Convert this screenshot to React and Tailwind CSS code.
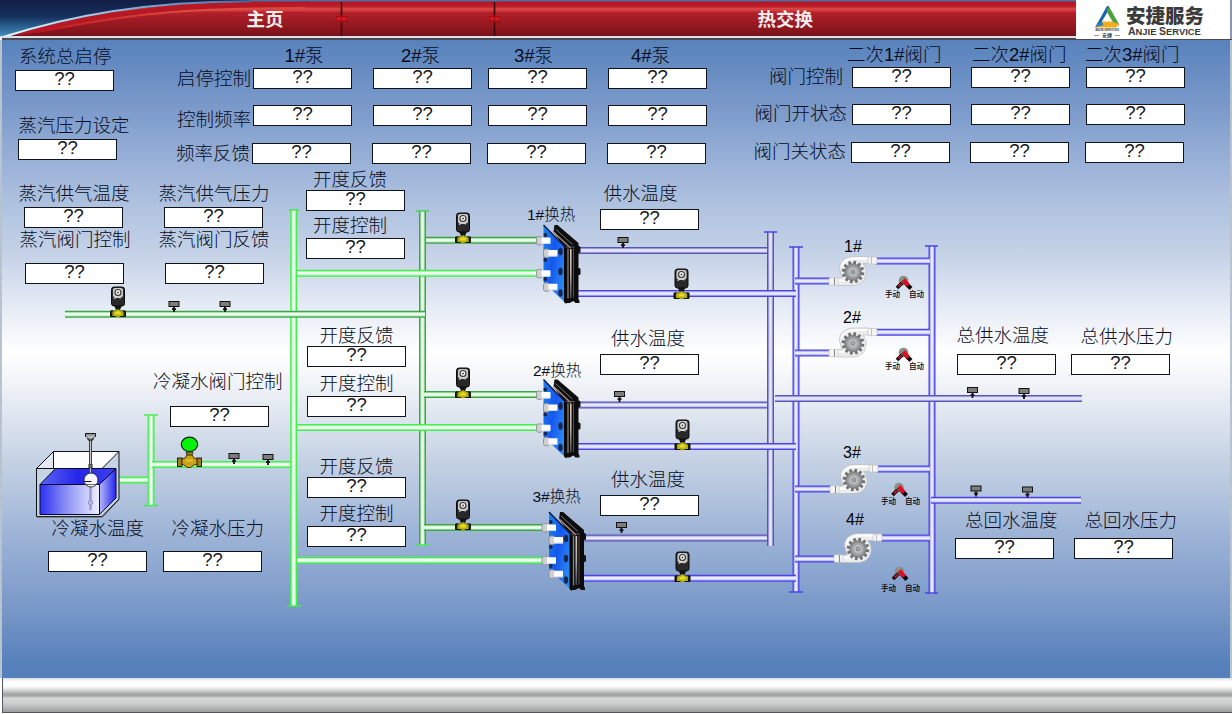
import React from "react";

const TOP = 40;

const labels = [
  ["系统总启停", 19, 56.5], ["蒸汽压力设定", 18.5, 126],
  ["蒸汽供气温度", 18.5, 194], ["蒸汽供气压力", 158.5, 194],
  ["蒸汽阀门控制", 19.5, 239.5], ["蒸汽阀门反馈", 158.5, 239.5],
  ["开度反馈", 313, 179.5], ["开度控制", 313, 225.5],
  ["开度反馈", 319.5, 335.5], ["开度控制", 319.5, 383.5],
  ["开度反馈", 319.5, 466.5], ["开度控制", 319.5, 513.5],
  ["冷凝水阀门控制", 153, 382], ["冷凝水温度", 51.5, 528.5], ["冷凝水压力", 171.5, 528.5],
  ["供水温度", 603.5, 194], ["供水温度", 611, 339], ["供水温度", 611, 479.5],
  ["总供水温度", 956.5, 336], ["总供水压力", 1080.5, 336.5],
  ["总回水温度", 965, 520.5], ["总回水压力", 1084.5, 520.5],
];

const midLabels = [
  ["1#换热", 527, 215], ["2#换热", 533, 371], ["3#换热", 532.5, 497],
];

const pumpLabels = [["1#", 844, 246.5], ["2#", 843, 318], ["3#", 843, 452.5], ["4#", 846, 519.5]];

const boxes = [
  [15, 70], [18, 139], [24, 207], [164, 207], [25, 263], [165, 263],
  [306, 190], [306, 238], [170, 406], [307, 346], [307, 396], [307, 477], [307, 526],
  [48, 551], [163, 551], [600, 209], [600, 354], [600, 495],
  [957, 354], [1071, 354], [955, 538], [1074, 538],
];

const switches = [[904, 281], [904, 353], [899.5, 488], [900, 572]];
const switchText = [[885, 294.5], [885, 366.5], [881, 501.5], [881, 589]];

const tones = {
  lime: ["#43ee4d", "#a9f7b3", "#f4fff4"],
  green: ["#3fa348", "#a5e2a8", "#f1fcf0"],
  blue: ["#4b43e6", "#b1b2f4", "#e9ebfd"],
  violet: ["#5a54b4", "#b3b3e4", "#e6e8f8"],
};

const pipes = [
  ["lime", 151, 416, 151, 505], ["lime", 118, 480, 148, 480], ["lime", 152, 464.5, 292, 464.5],
  ["lime", 293.7, 210, 293.7, 606],
  ["green", 422.5, 211, 422.5, 545],
  ["green", 65, 314.3, 425, 314.3],
  ["green", 426, 240.3, 541, 240.3], ["green", 424, 394.5, 541, 394.5], ["green", 424, 527.5, 546, 527.5],
  ["lime", 297, 273.3, 541, 273.3], ["lime", 297, 427.5, 541, 427.5], ["lime", 297, 560.3, 546, 560.3],
  ["violet", 578, 250.5, 768, 250.5], ["violet", 578, 405, 768, 405], ["violet", 584, 538, 768, 538],
  ["violet", 770.5, 232, 770.5, 546],
  ["blue", 796, 247, 796, 592],
  ["blue", 576, 293.5, 796, 293.5], ["blue", 576, 446.5, 796, 446.5], ["blue", 580, 578.3, 796, 578.3],
  ["blue", 932, 246, 932, 594],
  ["blue", 795, 281, 830, 281], ["blue", 795, 353, 830, 353], ["blue", 795, 489, 831, 489], ["blue", 795, 559, 835, 559],
  ["blue", 876, 261, 930, 261], ["blue", 876, 332.3, 930, 332.3], ["blue", 877, 469, 930, 469], ["blue", 881, 538, 930, 538],
  ["violet", 775, 398.5, 1082, 398.5],
  ["blue", 931, 500.3, 1081, 500.3],
];

const caps = [
  ["#43ee4d", 144, 158, 415], ["#43ee4d", 144, 158, 505.5],
  ["#43ee4d", 289, 299, 210], ["#43ee4d", 287, 301, 606],
  ["#43d64d", 416, 429, 211], ["#43ee4d", 416, 429, 545],
  ["#4b43e6", 764, 777, 232], ["#4b43e6", 789, 803, 247], ["#4b43e6", 789, 803, 592],
  ["#4b43e6", 925, 938, 246], ["#4b43e6", 925, 938, 593],
];

const sensors = [
  [174, 301], [225, 301], [234, 453], [268, 454], [623, 237], [619.5, 391], [621.5, 522],
  [972.5, 387], [1024, 388], [976, 485.5], [1027.5, 486.5],
];

const valves = [
  [118, 287], [463, 213], [463, 368], [463, 500], [681.5, 269], [682.5, 420], [682.5, 552],
];

function Pipe({ d }) {
  const [tone, x1, y1, x2, y2] = d;
  const [edge, mid, core] = tones[tone];
  const p = { x1, y1, x2, y2 };
  return (
    <g>
      <line {...p} stroke={edge} strokeWidth="7" />
      <line {...p} stroke={mid} strokeWidth="4.4" />
      <line {...p} stroke={core} strokeWidth="2.4" />
    </g>
  );
}

function Sensor({ x, y }) {
  return (
    <g transform={`translate(${x} ${y})`}>
      <rect x="-5" y="0.5" width="10" height="5" fill="#7d7d7d" stroke="#111" />
      <path d="M0 6v5M-2 8.2h4" stroke="#111" strokeWidth="1.8" />
    </g>
  );
}

function Valve({ x, y }) {
  return (
    <g transform={`translate(${x} ${y})`}>
      <path d="M-4.5 17h9l-2.5 6h-4z" fill="#151515" />
      <rect x="-6.5" y="0" width="13" height="19" rx="2.5" fill="#292929" stroke="#0c0c0c" />
      <rect x="-5" y="1" width="10" height="9.5" rx="2" fill="#c9c9c9" />
      <circle cx="0" cy="5.5" r="3" fill="#f3f3f3" stroke="#333" strokeWidth="1.1" />
      <circle cx="0" cy="5.5" r="0.9" fill="#444" />
      <path d="M-4 11.5l3-1.5 4 1" stroke="#ddd" strokeWidth="1.2" fill="none" />
      <rect x="-8" y="23.5" width="16" height="6.5" rx="1" fill="#151500" />
      <path d="M-6.5 25L-2.5 23.5L0 22L2.5 23.5L6.5 25V29H3L0 30.5L-3 29H-6.5z" fill="#b5ae12" />
      <path d="M-3 25.5l3-1.5 3 1.5v2h-6z" fill="#e2dc27" />
      <path d="M-6.2 23.5v6.5M6.2 23.5v6.5" stroke="#111" strokeWidth="1.2" />
    </g>
  );
}

function Port({ x, y }) {
  return (
    <g>
      <rect x={x} y={y - 4} width="6" height="8.5" rx="2.2" fill="#d0d0d2" stroke="#8d8d92" strokeWidth="0.9" />
      <rect x={x + 5} y={y - 3} width="9" height="6.4" rx="0.6" fill="#fff" />
      <path d={`M${x + 5.5} ${y + 3}h8`} stroke="#c8cfe6" strokeWidth="0.8" />
    </g>
  );
}

function Exchanger({ x, y }) {
  return (
    <g transform={`translate(${x} ${y})`}>
      <rect x="32" y="21" width="5" height="7" rx="1.5" fill="#111" />
      <rect x="32" y="43" width="5" height="7" rx="1.5" fill="#111" />
      <path d="M11 0h3l21 18v56l1 2v2h-4l-2-2-4 2h-4V24L10 7z" fill="#0c0c0c" />
      <path d="M12 4l17 15.5" stroke="#777" strokeWidth="1" />
      <path d="M10 7l17 16" stroke="#a8907c" strokeWidth="1.4" />
      <path d="M24.5 23.5v50" stroke="#8a8078" strokeWidth="1.3" />
      <path d="M27.3 24v49" stroke="url(#plate)" strokeWidth="1.6" />
      <path d="M30 23.5v49" stroke="#55504c" strokeWidth="1" />
      <path d="M22 22h9" stroke="#777" strokeWidth="0.8" />
      <path d="M0 0L22.5 23V78.5L0 57z" fill="url(#face)" />
      <path d="M20.5 21l2.5 2.5V79l-2.5-2z" fill="#080808" />
      <path d="M0 0L22.5 23" stroke="#0b1640" strokeWidth="1.4" />
      <g fill="#16264a">
        <ellipse cx="1.8" cy="10" rx="1.8" ry="2" />
        <ellipse cx="1.8" cy="35" rx="1.8" ry="2" />
        <ellipse cx="1.8" cy="54" rx="1.8" ry="2" />
        <ellipse cx="17" cy="26.5" rx="2.2" ry="3.8" />
        <ellipse cx="17" cy="46.5" rx="2.2" ry="3.8" />
        <ellipse cx="17" cy="68" rx="2.2" ry="3.8" />
      </g>
      <Port x={-7} y={15.5} />
      <Port x={0} y={28} />
      <Port x={-7} y={48.3} />
      <Port x={0} y={61.8} />
    </g>
  );
}

const teeth = [0, 30, 60, 90, 120, 150, 180, 210, 240, 270, 300, 330];

function Pump({ x, y }) {
  return (
    <g transform={`translate(${x} ${y})`}>
      <path d="M-13.500 -3C-14 -11 -7 -15.500 1 -15.500H16V-8.500H9.500C14 -4 14 3 11 8C8 12 4 13.500 0 13.500H-16V6H-11z" fill="#ececed" stroke="#bcbcbe" strokeWidth="0.7" />
      <path d="M-11.500 -5C-10 -11 -5 -13.500 2 -13.500H15" stroke="#fff" strokeWidth="2" fill="none" />
      <path d="M-15 8.5h8" stroke="#fff" strokeWidth="2" />
      <rect x="15" y="-15" width="9" height="7" rx="1" fill="#f5f5f5" stroke="#bcbcbe" strokeWidth="0.6" />
      <path d="M18.5 -15v7" stroke="#b2b2b4" strokeWidth="0.8" />
      <rect x="-24" y="5.8" width="9" height="7.400" rx="1" fill="#f5f5f5" stroke="#bcbcbe" strokeWidth="0.6" />
      <path d="M-18.5 6v7" stroke="#88888a" strokeWidth="1.1" />
      <g fill="#6f7173">
        {teeth.map((a) => <path key={a} d="M-1.7 -7.5L-1.2 -11.3H1.2L1.7 -7.5z" transform={`rotate(${a + 10})`} />)}
      </g>
      <circle r="8.6" fill="url(#gear)" />
      <circle r="1.8" fill="#b5b5b5" stroke="#666" strokeWidth="0.8" />
    </g>
  );
}

function Switch({ x, y }) {
  return (
    <g transform={`translate(${x} ${y})`}>
      <circle cx="-0.5" cy="-0.5" r="4.8" fill="#899089" />
      <path d="M-2 2L-7 7" stroke="#080808" strokeWidth="3.8" />
      <path d="M-2.5 2.5l-3 3" stroke="#d00b20" strokeWidth="2" />
      <path d="M3 3.5L7 7.5" stroke="#080808" strokeWidth="4" />
      <path d="M-0.5 -1.5L4.5 4.5" stroke="#e60b20" strokeWidth="4" />
      <path d="M-2.5 0L3 6" stroke="#300" strokeWidth="0.7" />
    </g>
  );
}

function Tank() {
  return (
    <g strokeLinejoin="round">
      <path d="M36.5 468.5L53.5 451.5H119V499L102 516.5H36.5z" fill="#c5d3e2" stroke="#111" />
      <path d="M54 452H118.5L102 468.5H54z" fill="#fdfdfe" />
      <path d="M36.5 468.5L53.5 451.5V468.5z" fill="#e3e9f2" />
      <path d="M53.5 451.5H119L102 468.5H36.5L53.5 451.5V468" fill="none" stroke="#111" />
      <path d="M40 484.5L55.5 468.5H116L99.5 484.5z" fill="url(#liquidTop)" stroke="#080830" />
      <path d="M99.5 484.5L116 468.5V498L99.5 514.5z" fill="url(#liquidSide)" stroke="#080830" />
      <rect x="40" y="484.5" width="59.5" height="30" fill="url(#liquid)" stroke="#080830" />
      <path d="M37 517H102.5L119 499.5" fill="none" stroke="#444" />
      <path d="M90.5 487v14M90.5 504v6" stroke="#9b96c8" strokeWidth="2.4" />
      <rect x="88.5" y="501" width="4" height="3" fill="#c9c9e6" stroke="#8580b8" strokeWidth="0.7" />
      <path d="M90.5 440v36" stroke="#333" strokeWidth="3" />
      <path d="M90.5 440v36" stroke="#c5c5c5" strokeWidth="1.2" />
      <rect x="88.8" y="464.5" width="3.4" height="3.2" fill="#777" stroke="#222" strokeWidth="0.7" />
      <path d="M85.5 433.5h10v3l-2.5 1.5v2h-5v-2l-2.5-1.5z" fill="#999" stroke="#111" />
      <path d="M86 437h9" stroke="#eee" strokeWidth="0.8" />
      <circle cx="91" cy="480" r="7" fill="#f7f7fb" stroke="#222" strokeWidth="0.9" />
      <path d="M84.5 481.5h7" stroke="#111" strokeWidth="1" />
      <path d="M86 484.5h10" stroke="#444" strokeWidth="0.8" />
    </g>
  );
}

function GaugeValve() {
  return (
    <g>
      <path d="M186 452h7l-1.5 4.500h-4z" fill="#a3840f" stroke="#222" strokeWidth="0.8" />
      <path d="M181 459l4-1 2-3h5l2 3 4 1v5l-4 1-3.500 2.500h-3L184 465l-3-1z" fill="#caa416" stroke="#302600" strokeWidth="0.9" />
      <rect x="177.500" y="458" width="4.500" height="8.500" fill="#9d7c10" stroke="#111" strokeWidth="0.9" />
      <rect x="197" y="458" width="4.500" height="8.500" fill="#9d7c10" stroke="#111" strokeWidth="0.9" />
      <path d="M185.500 461.500c1-3 7-3 8 0" fill="#e5c22c" />
      <ellipse cx="189.500" cy="444.300" rx="8.200" ry="7.200" fill="#05f30b" stroke="#0d1f0d" strokeWidth="1.200" />
    </g>
  );
}

function Box({ children = "??" }) {
  return (
    <div className="flex h-[21px] w-[99px] items-center justify-center border border-[#10131c] bg-white pb-[2px] font-['Liberation_Sans',sans-serif] text-[18.500px] leading-none text-[#15171c]">
      {children}
    </div>
  );
}

function Row({ name, count, cols, className, nameClass = "" }) {
  return (
    <div className={`grid h-[21px] ${cols} ${className}`}>
      <div className={`flex items-center justify-end whitespace-nowrap pr-[2px] ${nameClass}`}>{name}</div>
      {Array.from({ length: count }, (_, i) => <Box key={i} />)}
    </div>
  );
}

function Logo() {
  return (
    <div className="flex h-[39px] w-[156px] items-start border-r-2 border-[#8a97ad] bg-white pl-[17px] text-[#3b3b3b]">
      <div className="flex w-[28px] flex-col items-center pt-[6px]">
        <svg width="26" height="23" viewBox="0 0 26 23">
          <path d="M13 0L1 21.500L7 17L13.500 6L17 12L19.500 9.500L14.500 0z" fill="#1766ae" />
          <path d="M14.500 0L25.500 19L19 16.500L12.500 5z" fill="#4da13c" />
          <path d="M12.500 5L16 11L19 16.500L17 12z" fill="#8dc63f" />
          <path d="M1 21.500H22L25.500 18.500L18.500 15.500H8z" fill="#f0ae21" />
          <path d="M1 21.500L8 15.500L9.500 19z" fill="#1d82c4" />
        </svg>
        <div className="h-[3px] whitespace-nowrap text-[3px] font-bold leading-[3px] tracking-tight">ANJIE SERVICES</div>
        <div className="flex items-center gap-[3px] text-[5px] font-bold leading-[6px]">
          <span className="h-px w-[5px] bg-[#999]" />安捷<span className="h-px w-[5px] bg-[#999]" />
        </div>
      </div>
      <div className="pl-[5px] pt-[7px]">
        <div className="h-[19px] whitespace-nowrap text-[19.500px] font-black leading-[19px]">安捷服务</div>
        <div className="whitespace-nowrap pl-[2px] font-['Liberation_Sans',sans-serif] text-[9.400px] font-bold leading-[10px]">
          <span className="text-[10.500px]">A</span>NJIE <span className="text-[10.500px]">S</span>ERVICE
        </div>
      </div>
    </div>
  );
}

function Header() {
  return (
    <header className="relative flex h-[40px] items-start justify-between">
      <svg className="absolute inset-0" width="1232" height="40" viewBox="0 0 1232 40">
        <defs>
          <linearGradient id="navy" x1="0" y1="0" x2="0" y2="1">
            <stop offset="0" stopColor="#131d45" /><stop offset="0.450" stopColor="#15305c" /><stop offset="1" stopColor="#3e8cbd" />
          </linearGradient>
          <linearGradient id="red" x1="0" y1="0" x2="0" y2="1">
            <stop offset="0" stopColor="#b41420" /><stop offset="0.160" stopColor="#c0202a" /><stop offset="0.200" stopColor="#d94745" />
            <stop offset="0.270" stopColor="#cf3a3c" /><stop offset="0.320" stopColor="#b3202a" /><stop offset="1" stopColor="#7b1118" />
          </linearGradient>
          <linearGradient id="arc" x1="0" y1="0" x2="1" y2="0">
            <stop offset="0" stopColor="#eaf6fb" /><stop offset="0.500" stopColor="#8eb0d4" /><stop offset="1" stopColor="#4a6ba8" />
          </linearGradient>
          <linearGradient id="sweep" gradientUnits="userSpaceOnUse" x1="70" y1="0" x2="300" y2="0">
            <stop offset="0" stopColor="#d8483c" stopOpacity="0.300" /><stop offset="0.500" stopColor="#dc5040" /><stop offset="1" stopColor="#d94745" />
          </linearGradient>
        </defs>
        <rect width="1232" height="36" fill="url(#navy)" />
        <rect x="250" width="982" height="2" fill="#4a6ea6" />
        <path d="M10 36C70 17 150 1.500 260 1.500H1232V36z" fill="url(#red)" />
        <path d="M14 35.500C70 18 150 2 260 2L300 7C190 9 110 18 50 31z" fill="#b81823" />
        <path d="M60 28C140 12 200 8 305 8" stroke="url(#sweep)" strokeWidth="2" fill="none" />
        <path d="M3 37C70 16 145 1.200 250 1.200" stroke="url(#arc)" strokeWidth="2" fill="none" />
        <rect y="36" width="1232" height="2" fill="#d9dfe6" />
        <rect x="2" y="38" width="1230" height="2" fill="#4d4854" />
        <path d="M341.500 2v34M494.500 2v34" stroke="#3c070b" strokeWidth="1.600" />
        <path d="M336 16.500h11v4.500h-11zM489.500 16.500h11v4.500h-11z" fill="#d8141d" stroke="#8e0d14" strokeWidth="0.800" />
        <path d="M341.500 15v8M494.500 15v8" stroke="#a00c14" strokeWidth="1" />
      </svg>
      <nav className="relative flex h-[40px] items-center pl-[246.500px] pt-px text-[18.500px] font-bold leading-none text-[#f5eeee]">
        <span className="w-[511px]">主页</span>
        <span>热交换</span>
      </nav>
      <div className="relative">
        <Logo />
      </div>
    </header>
  );
}

export default function App() {
  return (
    <div className="flex h-[714px] w-[1232px] flex-col overflow-hidden bg-white font-['Liberation_Sans','Noto_Sans_CJK_SC',sans-serif]">
      <Header />
      <main className="relative h-[638px] border-l-2 border-r-2 border-[#b9c2cf] bg-[linear-gradient(to_bottom,#5882bc_0%,#7c9bcb_11%,#a3b9db_22%,#cad6e9_35%,#e6ecf5_42%,#ffffff_49%,#f0f3f7_54%,#c5d2e4_66%,#9fb5d7_77%,#7c9bca_88%,#5680ba_98%,#5480bb_100%)] text-[18.500px] font-light text-[#060c1c]">
        <div className="flex pl-[173px] pt-[3px] leading-none">
          <section className="w-[576px] pt-px">
            <div className="grid h-[24px] grid-cols-[78px_120px_115px_120px_99px] items-center">
              <span />
              <span className="pl-[31.500px]">1#泵</span>
              <span className="pl-[28px]">2#泵</span>
              <span className="pl-[26px]">3#泵</span>
              <span className="pl-[23px]">4#泵</span>
            </div>
            <Row name="启停控制" count={4} cols="grid-cols-[78px_120px_115px_120px_99px]" className="" nameClass="pt-[2px]" />
            <Row name="控制频率" count={4} cols="grid-cols-[78px_120px_115px_120px_99px]" className="mt-[16px]" nameClass="pt-[6px]" />
            <Row name="频率反馈" count={4} cols="grid-cols-[77px_120px_115px_120px_99px]" className="mt-[17px]" nameClass="pt-px" />
          </section>
          <section>
            <div className="grid h-[24px] grid-cols-[96px_125px_113px_99px] items-center whitespace-nowrap">
              <span />
              <span>二次1#阀门</span>
              <span>二次2#阀门</span>
              <span>二次3#阀门</span>
            </div>
            <Row name="阀门控制" count={3} cols="grid-cols-[101px_119px_115px_99px]" className="" nameClass="pr-[9px]" />
            <Row name="阀门开状态" count={3} cols="grid-cols-[101px_119px_115px_99px]" className="mt-[16px]" nameClass="pr-[5px]" />
            <Row name="阀门关状态" count={3} cols="grid-cols-[100px_119px_115px_99px]" className="mt-[17px]" nameClass="pr-[5px]" />
          </section>
        </div>

        <div className="absolute -left-[2px] top-0 h-[638px] w-[1232px]">
          <svg className="absolute inset-0" width="1232" height="638" viewBox="0 40 1232 638">
            <defs>
              <linearGradient id="face" x1="0" y1="0" x2="1" y2="0.600">
                <stop offset="0" stopColor="#1a86ee" /><stop offset="0.500" stopColor="#1657ee" /><stop offset="1" stopColor="#2b8af2" />
              </linearGradient>
              <linearGradient id="plate" gradientUnits="userSpaceOnUse" x1="0" y1="24" x2="0" y2="73">
                <stop offset="0" stopColor="#e0c9ba" /><stop offset="0.500" stopColor="#b8b2b0" /><stop offset="1" stopColor="#4a4a4a" />
              </linearGradient>
              <linearGradient id="liquid"><stop offset="0" stopColor="#2b2ff2" /><stop offset="0.450" stopColor="#8d92f6" /><stop offset="1" stopColor="#f0f1fe" /></linearGradient>
              <linearGradient id="liquidTop"><stop offset="0" stopColor="#5c64f3" /><stop offset="0.500" stopColor="#2526e8" /><stop offset="1" stopColor="#3d3ff2" /></linearGradient>
              <linearGradient id="liquidSide"><stop offset="0" stopColor="#b6b9fa" /><stop offset="1" stopColor="#2325ee" /></linearGradient>
              <radialGradient id="gear"><stop offset="0" stopColor="#dedede" /><stop offset="0.600" stopColor="#a6a7a9" /><stop offset="1" stopColor="#77797b" /></radialGradient>
            </defs>
            {pipes.map((d, i) => <Pipe key={i} d={d} />)}
            {caps.map(([c, x1, x2, y], i) => <path key={i} d={`M${x1} ${y}H${x2}`} stroke={c} strokeWidth="1.500" />)}
            {sensors.map(([x, y], i) => <Sensor key={i} x={x} y={y} />)}
            {valves.map(([x, y], i) => <Valve key={i} x={x} y={y} />)}
            <Exchanger x={543.500} y={225} />
            <Exchanger x={543.500} y={379.500} />
            <Exchanger x={549} y={512} />
            <Pump x={853} y={272} />
            <Pump x={853} y={343.500} />
            <Pump x={854} y={480} />
            <Pump x={858} y={549} />
            {switches.map(([x, y], i) => <Switch key={i} x={x} y={y} />)}
            <Tank />
            <GaugeValve />
          </svg>
          {boxes.map(([x, y], i) => (
            <div key={i} className="absolute" style={{ left: x, top: y - TOP }}><Box /></div>
          ))}
          {labels.map(([t, x, y], i) => (
            <div key={i} className="absolute whitespace-nowrap leading-[28px]" style={{ left: x, top: y - 14 - TOP }}>{t}</div>
          ))}
          {midLabels.map(([t, x, y], i) => (
            <div key={i} className="absolute whitespace-nowrap text-[15.500px] leading-[20px]" style={{ left: x, top: y - 10 - TOP }}>{t}</div>
          ))}
          {pumpLabels.map(([t, x, y], i) => (
            <div key={i} className="absolute whitespace-nowrap text-[16px] leading-[20px] text-black" style={{ left: x, top: y - 10 - TOP }}>{t}</div>
          ))}
          {switchText.map(([x, y], i) => (
            <div key={i} className="absolute flex gap-[9px] whitespace-nowrap text-[7.500px] font-medium leading-[10px] text-black" style={{ left: x, top: y - 5 - TOP }}>
              <span>手动</span><span>自动</span>
            </div>
          ))}
        </div>
      </main>
      <footer className="ml-[2px] h-[35px] border-b border-l border-[#55585c] bg-[linear-gradient(to_bottom,#d8dde2_0px,#fafafa_3px,#ffffff_8px,#d8d9d9_12px,#a3a5a4_16px,#a6a8a7_18px,#d5d7d6_20px,#cfd0d0_25px,#9d9e9e_34px)]" />
    </div>
  );
}
